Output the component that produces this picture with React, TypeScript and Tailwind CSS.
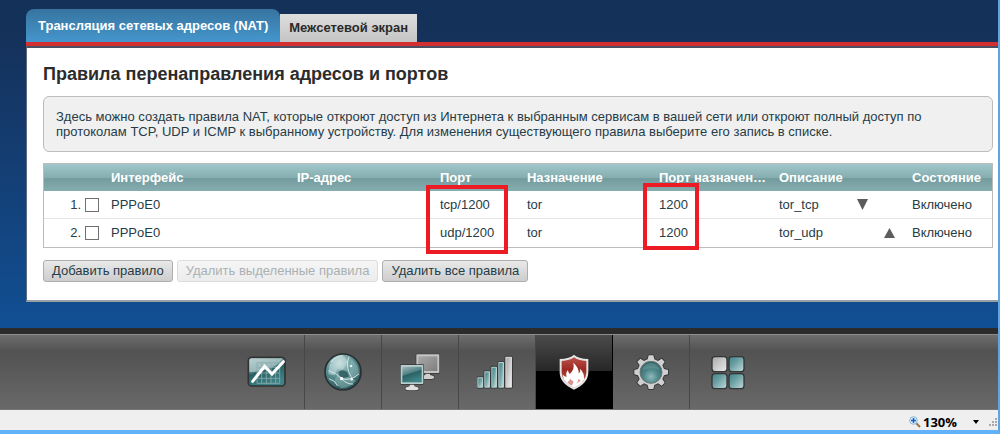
import React, { useState } from 'react';

interface NatRule {
  id: number;
  iface: string;
  ip: string;
  port: string;
  target: string;
  targetPort: string;
  description: string;
  status: string;
}

const rules: NatRule[] = [
  { id: 1, iface: 'PPPoE0', ip: '', port: 'tcp/1200', target: 'tor', targetPort: '1200', description: 'tor_tcp', status: 'Включено' },
  { id: 2, iface: 'PPPoE0', ip: '', port: 'udp/1200', target: 'tor', targetPort: '1200', description: 'tor_udp', status: 'Включено' },
];

const Gradients: React.FC = () => (
  <svg width="0" height="0" className="absolute" aria-hidden="true">
    <defs>
      <linearGradient id="teal" x1="0" y1="0" x2="1" y2="1">
        <stop offset="0" stopColor="#3f8488" />
        <stop offset="0.4" stopColor="#6a9fa2" />
        <stop offset="1" stopColor="#c3dcdc" />
      </linearGradient>
      <linearGradient id="tealDark" x1="0" y1="0" x2="0.4" y2="1">
        <stop offset="0" stopColor="#a3bcbd" />
        <stop offset="0.48" stopColor="#4f8184" />
        <stop offset="0.55" stopColor="#2b6164" />
        <stop offset="1" stopColor="#3e8387" />
      </linearGradient>
      <linearGradient id="silver" x1="0" y1="0" x2="1" y2="1">
        <stop offset="0" stopColor="#a9a9a9" />
        <stop offset="1" stopColor="#ececec" />
      </linearGradient>
      <linearGradient id="grayScreen" x1="0" y1="0" x2="1" y2="1">
        <stop offset="0" stopColor="#a8a8a8" />
        <stop offset="1" stopColor="#7f7f7f" />
      </linearGradient>
      <linearGradient id="red" x1="0" y1="0" x2="0" y2="1">
        <stop offset="0" stopColor="#bb5049" />
        <stop offset="0.4" stopColor="#9c2a22" />
        <stop offset="1" stopColor="#c4706b" />
      </linearGradient>
      <radialGradient id="lens" cx="0.5" cy="0.7" r="0.65">
        <stop offset="0" stopColor="#8fb9bb" />
        <stop offset="0.5" stopColor="#4f888b" />
        <stop offset="1" stopColor="#2f6467" />
      </radialGradient>
      <radialGradient id="globe" cx="0.4" cy="0.25" r="0.8">
        <stop offset="0" stopColor="#cfe3e3" />
        <stop offset="0.45" stopColor="#5f9497" />
        <stop offset="1" stopColor="#244d50" />
      </radialGradient>
    </defs>
  </svg>
);

const iconClasses = 'size-10';

const MonitorIcon: React.FC = () => (
  <svg viewBox="-2 0 120 120" className={iconClasses}>
    <rect x="5" y="16" width="110" height="86" rx="10" fill="url(#tealDark)" stroke="#303333" strokeWidth="5" />
    <path d="M8 60V26q0-7 7-7h93q-25 40-100 41Z" fill="#d5e6e6" opacity="0.55" />
    <path d="M31 32h68v62H31ZM45 32v62M59 32v62M73 32v62M87 32v62M31 47h68M31 63h68M31 79h68" fill="none" stroke="#8cadae" strokeWidth="3" opacity="0.8" />
    <path d="M18 88 54 43 76 66 110 29" fill="none" stroke="#fff" strokeWidth="9" strokeLinecap="round" />
  </svg>
);

const GlobeIcon: React.FC = () => (
  <svg viewBox="0 0 120 120" className={iconClasses}>
    <circle cx="60" cy="60" r="54" fill="url(#globe)" stroke="#2a3030" strokeWidth="5" />
    <path d="M20 38Q40 12 64 14L74 30 60 52 44 50 34 70 16 66Z" fill="#c4dddd" opacity="0.55" />
    <path d="M82 20Q106 34 108 62L96 78 78 70 84 46Z" fill="#9fc5c6" opacity="0.45" />
    <path d="M38 76Q56 56 70 66T98 86Q80 108 54 108L34 92Z" fill="#8fb9ba" opacity="0.5" />
    <path d="M46 60Q58 50 72 60L78 74 62 78 50 72Z" fill="#2a5a5d" opacity="0.85" />
    <path d="M16 56Q40 62 56 80T90 96M78 14Q64 46 90 84M56 80Q82 88 108 66M18 80l16 8 10 14" fill="none" stroke="#e7f2f2" strokeWidth="3" opacity="0.8" />
    <path d="M24 30Q40 12 60 11" fill="none" stroke="#edf6f6" strokeWidth="4" opacity="0.6" />
    <circle cx="84" cy="42" r="4" fill="#fff" opacity="0.8" />
    <circle cx="56" cy="80" r="5" fill="#fff" />
    <circle cx="86" cy="82" r="4" fill="#fff" opacity="0.8" />
  </svg>
);

const HomeNetworkIcon: React.FC = () => (
  <svg viewBox="0 0 120 120" className={iconClasses}>
    <g stroke="#363636" strokeWidth="4" paintOrder="stroke">
      <path d="M76 60h14v9q13 2 13 8 0 4-20 4t-20-4q0-6 13-8Z" fill="#cfcfcf" />
      <rect x="49" y="7" width="69" height="56" rx="2" fill="#c4c4c4" />
    </g>
    <rect x="55" y="13" width="57" height="44" fill="url(#grayScreen)" />
    <g stroke="#363636" strokeWidth="4" paintOrder="stroke">
      <path d="M29 94h14v9q13 2 13 8 0 4-20 4t-20-4q0-6 13-8Z" fill="#e0e0e0" />
      <rect x="2" y="39" width="68" height="57" rx="2" fill="#b9cfcf" />
    </g>
    <rect x="7" y="44" width="58" height="47" fill="url(#tealDark)" />
  </svg>
);

const SignalIcon: React.FC = () => (
  <svg viewBox="7 0 120 120" className={iconClasses}>
    <g stroke="#303434" strokeWidth="5" paintOrder="stroke">
      <rect x="8" y="76" width="18" height="31" rx="2" fill="#b7d0d1" />
      <rect x="29" y="58" width="17" height="49" rx="2" fill="#b7d0d1" />
      <rect x="50" y="44" width="17" height="63" rx="2" fill="#b7d0d1" />
      <rect x="71" y="30" width="17" height="77" rx="2" fill="#b7d0d1" />
      <rect x="92" y="14" width="20" height="93" rx="2" fill="#d8d8d8" />
    </g>
    <g fill="url(#teal)">
      <rect x="11" y="79" width="12" height="25" />
      <rect x="32" y="61" width="11" height="43" />
      <rect x="53" y="47" width="11" height="57" />
      <rect x="74" y="33" width="11" height="71" />
    </g>
    <rect x="95" y="17" width="14" height="87" fill="url(#silver)" />
  </svg>
);

const FirewallIcon: React.FC = () => (
  <svg viewBox="0 0 120 120" className={iconClasses}>
    <path d="M60 8Q72 20 103 21V62Q102 94 60 113 18 94 17 62V21Q48 20 60 8Z" fill="#e4e4e4" />
    <path d="M60 16Q72 26 97 27V62Q96 89 60 107 24 89 23 62V27Q48 26 60 16Z" fill="url(#red)" />
    <path d="M58 32Q76 48 74 64 80 60 79 50 92 66 90 80 94 78 95 72 89 94 60 107 28 92 26 68 34 76 38 74 34 62 42 54 42 62 47 66 63 52 58 32Z" fill="#fff" />
    <path d="M48 79q3 8 10 8 2 8-5 14-10-5-13-11 7-1 8-11ZM73 80q0 10-7 15 9-3 15-11-6 1-8-4Z" fill="#d99490" />
  </svg>
);

const SystemIcon: React.FC = () => (
  <svg viewBox="0 0 120 120" className={iconClasses}>
    <g fill="#d0d0d0" stroke="#333" strokeWidth="5" paintOrder="stroke">
      <path d="M53 10h14l3 12 11 5 11-7 9 9-7 11 5 11 12 3v13l-12 3-5 11 7 11-9 9-11-7-11 5-3 12H53l-3-12-11-5-11 7-9-9 7-11-5-11-11-3V54l11-3 5-11-7-11 9-9 11 7 11-5Z" />
    </g>
    <circle cx="60" cy="61" r="33" fill="url(#lens)" stroke="#6c7474" strokeWidth="3" />
    <path d="M33 55Q37 34 60 32 83 34 87 55 60 43 33 55Z" fill="#b7d0d1" opacity="0.2" />
  </svg>
);

const AppsIcon: React.FC = () => (
  <svg viewBox="1 0 120 120" className={iconClasses}>
    <g stroke="#343737" strokeWidth="4">
      <rect x="13" y="14" width="45" height="45" rx="9" fill="url(#silver)" />
      <rect x="64" y="14" width="45" height="45" rx="9" fill="url(#teal)" />
      <rect x="13" y="65" width="45" height="45" rx="9" fill="url(#teal)" />
      <rect x="64" y="65" width="45" height="45" rx="9" fill="url(#teal)" />
    </g>
  </svg>
);

const navItems = [
  { id: 'monitor', label: 'Системный монитор', icon: <MonitorIcon /> },
  { id: 'internet', label: 'Интернет', icon: <GlobeIcon /> },
  { id: 'home', label: 'Домашняя сеть', icon: <HomeNetworkIcon /> },
  { id: 'wifi', label: 'Сеть Wi-Fi', icon: <SignalIcon /> },
  { id: 'security', label: 'Безопасность', icon: <FirewallIcon /> },
  { id: 'system', label: 'Система', icon: <SystemIcon /> },
  { id: 'apps', label: 'Приложения', icon: <AppsIcon /> },
];

const RulesTable: React.FC = () => {
  const [selected, setSelected] = useState<number[]>([]);

  const toggle = (id: number) =>
    setSelected(selected.includes(id) ? selected.filter(s => s !== id) : [...selected, id]);

  const thClasses = 'pl-2 text-left font-bold whitespace-nowrap';

  return (
    <table className="w-full table-fixed border-separate border-spacing-0 border border-[#bcbcbc] text-[13px] leading-5 text-[#263c47]">
      <colgroup>
        <col className="w-[59px]" />
        <col className="w-[186px]" />
        <col />
        <col className="w-[87px]" />
        <col className="w-[132px]" />
        <col className="w-[120px]" />
        <col className="w-[80px]" />
        <col className="w-[24px]" />
        <col className="w-[29px]" />
        <col className="w-[88px]" />
      </colgroup>
      <thead>
        <tr className="h-[27px] bg-[linear-gradient(to_bottom,#a0c7ca_0%,#86aeb1_50%,#739c9f_54%,#86adb0_100%)] text-white">
          <th />
          <th className={thClasses}>Интерфейс</th>
          <th className={thClasses}>IP-адрес</th>
          <th className={thClasses}>Порт</th>
          <th className={thClasses}>Назначение</th>
          <th className={thClasses}>Порт назначен…</th>
          <th className={thClasses} colSpan={3}>Описание</th>
          <th className={thClasses}>Состояние</th>
        </tr>
      </thead>
      <tbody>
        {rules.map((rule, i) => (
          <tr key={rule.id} className="h-7 [&:not(:last-child)>td]:border-b [&>td]:border-[#e4e4e4]">
            <td>
              <label className="flex items-center justify-end gap-1 pr-1">
                {rule.id}.
                <input
                  type="checkbox"
                  checked={selected.includes(rule.id)}
                  onChange={() => toggle(rule.id)}
                  className="size-3.5 appearance-none border border-[#707070] bg-white checked:bg-[#3f8488]"
                />
              </label>
            </td>
            <td className="px-2">{rule.iface}</td>
            <td className="px-2">{rule.ip}</td>
            <td className="relative px-2">
              {rule.port}
              {i === 0 && <span className="pointer-events-none absolute -top-1.5 -left-1.5 h-[69px] w-[82px] border-4 border-[#ed1c24]" />}
            </td>
            <td className="px-2">{rule.target}</td>
            <td className="relative px-2">
              {rule.targetPort}
              {i === 0 && <span className="pointer-events-none absolute -top-2 -left-2 h-[67px] w-[56px] border-4 border-[#ed1c24]" />}
            </td>
            <td className="px-2">{rule.description}</td>
            <td>
              {i < rules.length - 1 && (
                <button aria-label="Переместить вниз" className="mx-auto block">
                  <svg viewBox="0 0 11 11" className="size-[11px]"><path d="M0 0h11L5.5 11Z" fill="#5c5c5c" /></svg>
                </button>
              )}
            </td>
            <td>
              {i > 0 && (
                <button aria-label="Переместить вверх" className="mx-auto block">
                  <svg viewBox="0 0 11 11" className="size-[11px]"><path d="M0 10h11L5.5 0Z" fill="#5c5c5c" /></svg>
                </button>
              )}
            </td>
            <td className="px-2">{rule.status}</td>
          </tr>
        ))}
      </tbody>
    </table>
  );
};

const App: React.FC = () => {
  const [section, setSection] = useState('security');

  const buttonClasses = 'h-[22px] rounded-[3px] border border-[#adadad] bg-linear-to-b from-[#e9e9e9] to-[#cdcdcd] px-2 text-[13px] leading-5 text-[#263c47] disabled:border-[#dcdcdc] disabled:from-[#f6f6f6] disabled:to-[#ececec] disabled:text-[#a9b0b3]';

  return (
    <div className="flex flex-col border-r-2 border-b-4 border-r-[#5fa5e6] border-b-[#62b1fb] font-['Liberation_Sans',Arial,sans-serif]">
      <Gradients />
      <main className="bg-linear-to-b from-[#14315a] from-10% to-[#104f94] pt-[9px] pb-[26px] pl-[26px]">
        <div className="flex items-end border-b-4 border-[#d32f31]">
          <button className="h-[33px] rounded-t-lg bg-linear-to-b from-[#36749f] to-[#4596cd] px-3 text-[13px] font-bold text-white">
            Трансляция сетевых адресов (NAT)
          </button>
          <button className="h-7 bg-linear-to-b from-[#dedede] to-[#c4c4c4] px-[9px] text-[13px] font-bold text-[#2a2a2a]">
            Межсетевой экран
          </button>
        </div>
        <section className="border-t-2 border-b-2 border-l border-t-[#4a4f63] border-b-[#9aa0a6] border-l-[#5f6b80] bg-white pt-4 pr-[5px] pb-[18px] pl-4">
          <h1 className="text-lg leading-5 font-bold text-[#2c2c2c]">Правила перенаправления адресов и портов</h1>
          <p className="mt-3 rounded-md border border-[#bcbcbc] bg-[#f0f0f0] px-3 py-3 text-[13px] leading-[15px] text-[#263c47]">
            Здесь можно создать правила NAT, которые откроют доступ из Интернета к выбранным сервисам в вашей сети или откроют полный доступ по протоколам TCP, UDP и ICMP к выбранному устройству. Для изменения существующего правила выберите его запись в списке.
          </p>
          <div className="mt-[11px]">
            <RulesTable />
          </div>
          <div className="mt-3 flex gap-1">
            <button className={buttonClasses}>Добавить правило</button>
            <button className={buttonClasses} disabled>Удалить выделенные правила</button>
            <button className={buttonClasses}>Удалить все правила</button>
          </div>
        </section>
      </main>
      <nav className="border-t-[6px] border-[#2b2b2b] bg-[#666]">
        <div className="flex justify-center border-t border-b border-t-[#8e8e8e] border-b-[#757575] bg-linear-to-b from-[#6e6e6e] via-[#525252] via-22% to-[#696969] pr-1">
          {navItems.map(item => (
            <button
              key={item.id}
              aria-label={item.label}
              onClick={() => setSection(item.id)}
              className={`flex h-[74px] w-[77px] items-center justify-center border-r last:border-r-0 ${section === item.id ? 'border-black bg-linear-to-b from-[#4c4c4c] from-0% via-[#272727] via-48% to-black to-49%' : 'border-[#474747]'}`}
            >
              {item.icon}
            </button>
          ))}
        </div>
      </nav>
      <footer className="flex h-5 items-center justify-end bg-[#efefef] pt-1">
        <button className="flex items-center font-['Open_Sans',sans-serif] text-[13px] leading-4 font-bold text-black">
          <svg viewBox="0 0 12 12" className="mr-0.5 size-3">
            <path d="m7 7 4 4" stroke="#9b7248" strokeWidth="2" />
            <circle cx="4.5" cy="4.5" r="3.8" fill="#d9efff" stroke="#8db4d4" />
            <path d="M4.5 2v5M2 4.5h5" stroke="#1562b8" strokeWidth="1.5" />
          </svg>
          130%
          <svg viewBox="0 0 6 4" className="ml-4 h-1 w-1.5"><path d="M0 0h6L3 4Z" fill="#000" /></svg>
        </button>
        <svg viewBox="0 0 8 8" className="mr-px ml-2.5 size-2" fill="#a9a9a9">
          <path d="M6 0h2v2H6ZM3 3h2v2H3ZM6 3h2v2H6ZM0 6h2v2H0ZM3 6h2v2H3ZM6 6h2v2H6Z" />
        </svg>
      </footer>
    </div>
  );
};

export default App;
